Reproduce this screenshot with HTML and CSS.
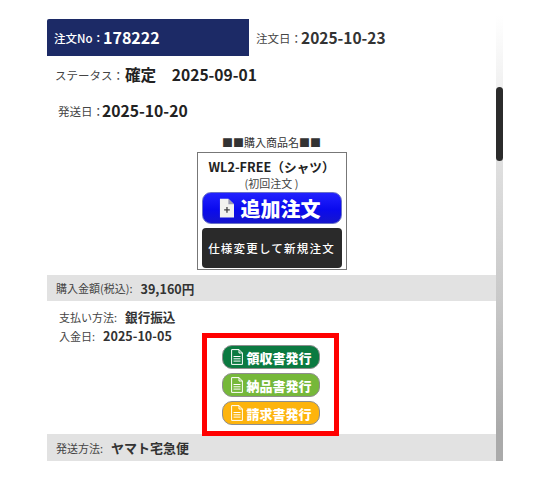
FILE: index.html
```html
<!DOCTYPE html>
<html lang="ja">
<head>
<meta charset="utf-8">
<title>注文詳細</title>
<link rel="stylesheet" href="styles.css">
</head>
<body>
<div class="panel">
  <main class="content">
    <div class="head-row">
      <div class="order-no"><span class="lbl-w">注文No：</span><b>178222</b></div>
      <div class="order-date"><span class="lbl">注文日：</span><b>2025-10-23</b></div>
    </div>
    <div class="status"><span class="lbl">ステータス：</span><b>確定　2025-09-01</b></div>
    <div class="shipped"><span class="lbl">発送日：</span><b>2025-10-20</b></div>
    <div class="product-title">■■購入商品名■■</div>
    <div class="product-box">
      <div class="product-name">WL2-FREE（シャツ）</div>
      <div class="product-sub">(初回注文 )</div>
      <a class="btn-add">
        <svg class="add-icon" viewBox="0 0 16 20"><path d="M1 0H10L16 6V20H1Z" fill="#f2f2ee"/><path d="M10 0L16 6H10Z" fill="#9a9ab0"/><path d="M8.5 9V15M5.5 12H11.5" stroke="#444" stroke-width="1.4"/></svg>
        <span>追加注文</span>
      </a>
      <a class="btn-change">仕様変更して新規注文</a>
    </div>
    <div class="band band-price"><span class="lbl-g">購入金額(税込):</span><b>39,160円</b></div>
    <div class="payment">
      <div class="pay-text">
        <div class="pay-row"><span class="lbl-g">支払い方法:</span><b>銀行振込</b></div>
        <div class="pay-row"><span class="lbl-g">入金日:</span><b>2025-10-05</b></div>
      </div>
      <div class="doc-box">
        <a class="doc green"><svg class="doc-icon" viewBox="0 0 12 16"><path d="M.6 .6H8L11.4 4V15.4H.6ZM8 .6V4H11.4M2.5 7.5H9.5M2.5 9.8H9.5M2.5 12.1H9.5" fill="none" stroke="#fff" stroke-width="1"/></svg><span>領収書発行</span></a>
        <a class="doc lime"><svg class="doc-icon" viewBox="0 0 12 16"><path d="M.6 .6H8L11.4 4V15.4H.6ZM8 .6V4H11.4M2.5 7.5H9.5M2.5 9.8H9.5M2.5 12.1H9.5" fill="none" stroke="#fff" stroke-width="1"/></svg><span>納品書発行</span></a>
        <a class="doc amber"><svg class="doc-icon" viewBox="0 0 12 16"><path d="M.6 .6H8L11.4 4V15.4H.6ZM8 .6V4H11.4M2.5 7.5H9.5M2.5 9.8H9.5M2.5 12.1H9.5" fill="none" stroke="#fff" stroke-width="1"/></svg><span>請求書発行</span></a>
      </div>
    </div>
    <div class="band band-ship"><span class="lbl-g">発送方法:</span><b>ヤマト宅急便</b></div>
  </main>
  <div class="scrollbar"><div class="thumb"></div></div>
</div>
</body>
</html>
```
FILE: styles.css
```css
* { box-sizing: border-box; }
html, body { margin: 0; padding: 0; background: #fff; }
body {
  width: 540px;
  height: 488px;
  overflow: hidden;
  font-family: "Noto Sans CJK JP", "Noto Sans", sans-serif;
  color: #222;
}
a { display: flex; color: #fff; text-decoration: none; }
.panel {
  display: flex;
  width: 456px;
  height: 461px;
  margin-left: 47px;
}
.content { width: 449px; height: 461px; overflow: hidden; }
.scrollbar {
  width: 7px;
  height: 461px;
  padding-top: 87px;
  background: linear-gradient(#fff 15px, #f4f4f4 70px, #dedede 170px, #c8c8c8 300px, #aaa 430px);
}
.thumb { width: 7px; height: 74px; border-radius: 4px; background: #2b2b2b; }

.head-row { display: flex; align-items: center; padding-top: 18px; height: 56px; }
.order-no {
  width: 202px;
  height: 37px;
  padding: 0 0 0 7px;
  background: #1c2a66;
  color: #fff;
  font-size: 11.5px;
  display: flex;
  align-items: center;
  border-radius: 2px 0 0 0;
}
.order-no b { font-size: 16px; font-weight: 700; line-height: 22px; margin-left: -1px; }
.lbl-w { font-weight: 500; margin-top: 1px; }
.order-date { margin-left: 7px; display: flex; align-items: center; }
.lbl { font-size: 11.5px; color: #444; margin-top: 2px; }
.order-date b { font-size: 15.5px; font-weight: 700; color: #333; margin-left: -1px; }
.status { display: flex; align-items: center; height: 22px; margin-top: 7px; padding-left: 8px; }
.status b { font-size: 15.6px; font-weight: 700; margin-left: 1px; }
.shipped { display: flex; align-items: center; height: 22px; margin-top: 14px; padding-left: 11px; }
.shipped b { font-size: 15.7px; font-weight: 700; margin-left: -2px; }
.product-title { margin-top: 13px; height: 16px; line-height: 16px; text-align: center; font-size: 11px; color: #333; }
.product-box {
  width: 150px;
  height: 118px;
  margin: 2px auto 0;
  border: 1px solid #777;
  padding: 4px 4px 0;
  text-align: center;
}
.product-name { height: 20px; line-height: 20px; font-size: 12.7px; font-weight: 700; text-align: left; padding-left: 7px; color: #222; }
.product-sub { height: 15px; line-height: 13px; font-size: 11px; color: #444; }
.btn-add {
  height: 32px;
  border-radius: 9px;
  align-items: center;
  justify-content: center;
  gap: 7px;
  background: linear-gradient(#2222ff, #0a0aee 55%, #1515cc);
  border: 1px solid #6a72c8;
  font-size: 20px;
  font-weight: 900;
  padding-right: 4px;
}
.add-icon { width: 15px; height: 20px; }
.btn-change {
  height: 40px;
  margin-top: 4px;
  border-radius: 4px;
  align-items: center;
  justify-content: center;
  background: #2a2a2a;
  font-size: 11.5px;
  font-weight: 500;
  letter-spacing: 1.2px;
}
.band { background: #e2e2e2; display: flex; align-items: center; }
.band-price { height: 26px; margin-top: 5px; padding-left: 9px; }
.band-ship { height: 27px; padding-left: 9px; }
.lbl-g { font-size: 11px; color: #444; }
.band b, .pay-row b { font-size: 12.6px; font-weight: 700; color: #333; margin-left: 8px; }
.band-ship b { font-size: 13px; }
.payment {
  display: grid;
  grid-template-columns: 155px 137px 1fr;
  height: 133px;
}
.pay-text { padding: 6px 0 0 12px; }
.pay-row { height: 19px; display: flex; align-items: center; }
.doc-box {
  position: relative;
  z-index: 1;
  height: 103px;
  margin-top: 32px;
  border: 5px solid #f00;
  padding-top: 7px;
  display: flex;
  flex-direction: column;
  align-items: center;
  gap: 4px;
  background: #fff;
}
.doc {
  width: 98px;
  height: 24px;
  padding-left: 2px;
  border-radius: 10px;
  border: 1.5px solid #8e8e8e;
  align-items: center;
  justify-content: center;
  gap: 3px;
  font-size: 13px;
  font-weight: 900;
  white-space: nowrap;
}
.doc-icon { width: 12px; height: 16px; flex: none; }
.green { background: #0b7a41; }
.lime { background: #76b83a; }
.amber { background: #fdb40d; }
```
